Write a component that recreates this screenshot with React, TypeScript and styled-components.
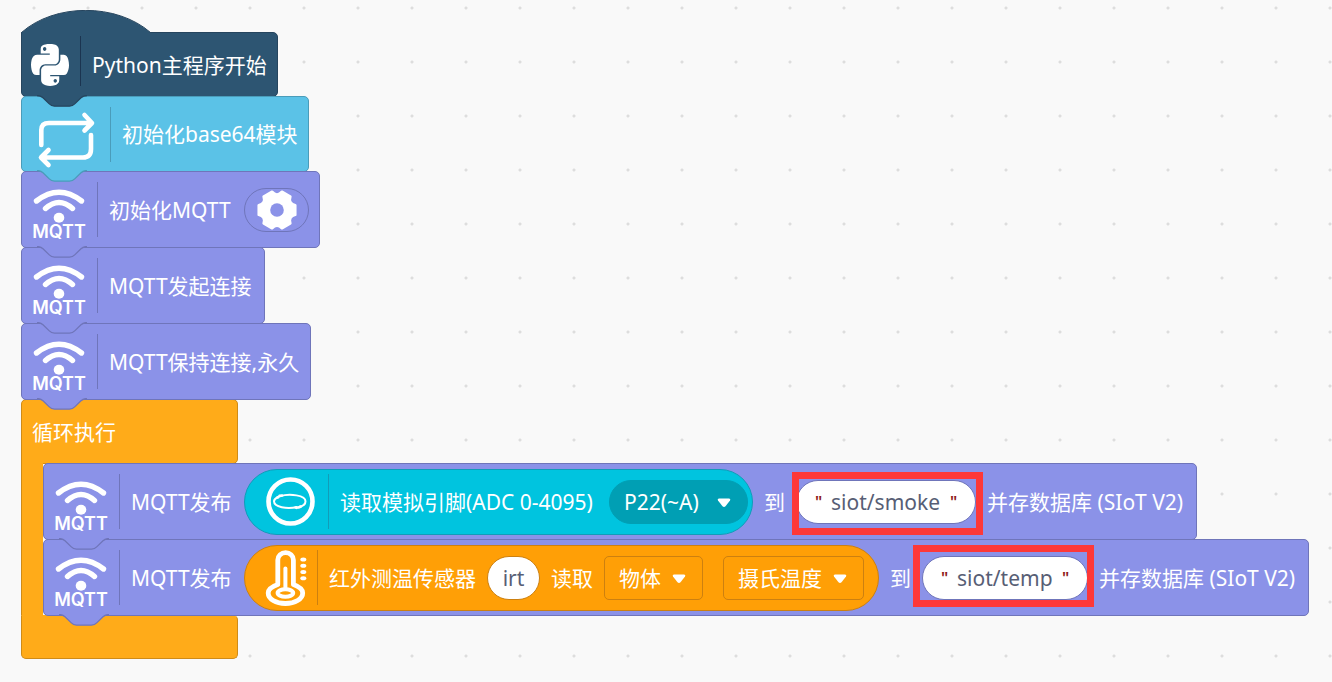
import React from 'react';
import styled, { createGlobalStyle } from 'styled-components';
import { FaPython } from 'react-icons/fa';

const GlobalStyle = createGlobalStyle`
  body {
    margin: 0;
    background: #f9f9f9;
  }
  *, *::before, *::after {
    box-sizing: border-box;
  }
`;

type Tone = { fill: string; line: string };

const navy: Tone = { fill: '#2d5572', line: '#26455e' };
const sky: Tone = { fill: '#5bc2e7', line: '#4a9cba' };
const violet: Tone = { fill: '#8b92e8', line: '#6f75ba' };
const amber: Tone = { fill: '#ffab19', line: '#cf8b17' };
const teal: Tone = { fill: '#00c4df', line: '#129cb8' };
const orange: Tone = { fill: '#ff9f06', line: '#cc8010' };

const Workspace = styled.main`
  min-height: 100vh;
  padding: 32px 21px 23px;
  overflow: hidden;
  background-color: #f9f9f9;
  background-image: radial-gradient(circle, #dddddd 1px, transparent 2px);
  background-size: 54px 54px;
  background-position: 7px -19px;
  font-family: 'Noto Sans', 'Noto Sans CJK SC', sans-serif;
  font-size: 21px;
  line-height: 30px;
  color: #fff;
`;

const Stack = styled.div`
  display: flex;
  flex-direction: column;
  align-items: flex-start;
`;

const BlockBox = styled.section<{ $tone: Tone; $height: number; $hat?: boolean }>`
  position: relative;
  display: flex;
  align-items: center;
  gap: 11px;
  height: ${(p) => p.$height}px;
  margin-bottom: -1px;
  padding: 0 10px 0 9px;
  border: 1px solid ${(p) => p.$tone.line};
  border-radius: ${(p) => (p.$hat ? '0 5px 5px 5px' : '5px')};
  background: ${(p) => p.$tone.fill};
`;

const TabSvg = styled.svg`
  position: absolute;
  z-index: 2;
  left: 15px;
  top: calc(100% - 1px);
`;

const HatSvg = styled.svg`
  position: absolute;
  left: -1px;
  bottom: calc(100% - 1px);
`;

const Divider = styled.span<{ $tone: Tone }>`
  flex: none;
  width: 1px;
  height: 55px;
  background: ${(p) => p.$tone.line};
`;

const HatDivider = styled.span`
  flex: none;
  align-self: flex-start;
  width: 1px;
  height: 50px;
  margin-top: 3px;
  background: #1b3450;
`;

const PythonIcon = styled(FaPython)`
  flex: none;
  width: 38px;
  height: 48px;
`;

const Icon = styled.svg`
  flex: none;
  display: block;
  overflow: visible;
  fill: none;
  stroke: #fff;
  stroke-linecap: round;
  stroke-linejoin: round;
`;

const BrandText = styled.text`
  fill: #fff;
  stroke: none;
  font-family: Inter, sans-serif;
  font-weight: 600;
  font-size: 18px;
`;

const Label = styled.span<{ $width?: number }>`
  flex: none;
  min-width: ${(p) => p.$width ?? 0}px;
  white-space: nowrap;
`;

const FieldLabel = styled.label<{ $width?: number }>`
  flex: none;
  min-width: ${(p) => p.$width ?? 0}px;
  white-space: nowrap;
`;

const Reporter = styled.div<{ $tone: Tone; $end: number }>`
  flex: none;
  display: flex;
  align-items: center;
  gap: 11px;
  height: 66px;
  margin-left: -1px;
  padding: 0 ${(p) => p.$end}px 0 20px;
  border: 1px solid ${(p) => p.$tone.line};
  border-radius: 33px;
  background: ${(p) => p.$tone.fill};
`;

const GearButton = styled.button`
  display: flex;
  align-items: center;
  justify-content: center;
  width: 65px;
  height: 44px;
  padding: 0;
  border: 1px solid ${violet.line};
  border-radius: 22px;
  background: transparent;
`;

const SelectBox = styled.span<{ $round?: boolean; $width: number }>`
  position: relative;
  flex: none;
  display: flex;
  width: ${(p) => p.$width}px;
  height: 44px;
  & + & {
    margin-left: 9px;
  }
  select {
    appearance: none;
    width: 100%;
    height: 100%;
    margin: 0;
    padding: 0 0 0 14px;
    border: 1px solid ${(p) => (p.$round ? '#009fb4' : orange.line)};
    border-radius: ${(p) => (p.$round ? 22 : 5)}px;
    background: ${(p) => (p.$round ? '#009fb4' : orange.fill)};
    color: #fff;
    font: inherit;
    outline: none;
  }
  svg {
    position: absolute;
    right: 17px;
    top: 18px;
    pointer-events: none;
  }
`;

const NameInput = styled.input`
  flex: none;
  width: 53px;
  height: 44px;
  margin: 0;
  padding: 0;
  border: 1px solid ${orange.line};
  border-radius: 22px;
  background: #fff;
  color: #575e75;
  font: inherit;
  text-align: center;
  outline: none;
`;

const StringField = styled.span`
  position: relative;
  flex: none;
  display: flex;
  align-items: center;
  gap: 9px;
  height: 44px;
  padding: 0 18px;
  border: 1px solid ${violet.line};
  border-radius: 22px;
  background: #fff;
`;

const TextInput = styled.input<{ $width: number }>`
  width: ${(p) => p.$width}px;
  height: 30px;
  margin: 0;
  padding: 0;
  border: 0;
  background: transparent;
  color: #575e75;
  font: inherit;
  outline: none;
`;

const Quote = styled.span`
  width: 7px;
  color: #8e1a1a;
  font-size: 16px;
  font-weight: 600;
  line-height: 30px;
  text-align: center;
`;

const Highlight = styled.span<{ $inset: string }>`
  position: absolute;
  z-index: 3;
  inset: ${(p) => p.$inset};
  border: 7px solid #fd3838;
  pointer-events: none;
`;

const LoopHeader = styled.header`
  display: flex;
  align-items: center;
  width: 217px;
  height: 65px;
  padding: 0 10px;
  border: 1px solid ${amber.line};
  border-radius: 5px 5px 5px 0;
  background: ${amber.fill};
`;

const LoopBody = styled.div`
  display: flex;
  margin-top: -1px;
`;

const LoopArm = styled.div`
  position: relative;
  z-index: 1;
  flex: none;
  width: 22px;
  border-left: 1px solid ${amber.line};
  background: ${amber.fill};
`;

const LoopFooter = styled.footer`
  width: 217px;
  height: 44px;
  border: 1px solid ${amber.line};
  border-top-color: ${amber.fill};
  border-radius: 0 5px 5px 5px;
  background: ${amber.fill};
`;

const Tab = ({ tone }: { tone: Tone }) => (
  <TabSvg width="50" height="13" viewBox="0 0 50 13" aria-hidden="true">
    <path
      d="M0 0.5 C3 0.5 4 1 6 2.8 L12 8.6 C13.6 10.2 15 11.2 17.5 11.2 H32.5 C35 11.2 36.4 10.2 38 8.6 L44 2.8 C46 1 47 0.5 50 0.5 V0 H0Z"
      fill={tone.fill}
    />
    <path
      d="M0 0.5 C3 0.5 4 1 6 2.8 L12 8.6 C13.6 10.2 15 11.2 17.5 11.2 H32.5 C35 11.2 36.4 10.2 38 8.6 L44 2.8 C46 1 47 0.5 50 0.5"
      fill="none"
      stroke={tone.line}
      strokeWidth="1.3"
    />
  </TabSvg>
);

type BlockProps = {
  tone: Tone;
  height?: number;
  hat?: boolean;
  children: React.ReactNode;
};

const Block = ({ tone, height = 77, hat, children }: BlockProps) => (
  <BlockBox $tone={tone} $height={height} $hat={hat}>
    {hat && (
      <HatSvg width="131" height="24" viewBox="0 0 131 24" aria-hidden="true">
        <path d="M0.5 24 V22.5 C34 -7 95.5 -7 129.5 22.5 V24Z" fill={tone.fill} />
        <path d="M0.5 24 V22.5 C34 -7 95.5 -7 129.5 22.5" fill="none" stroke={tone.line} />
      </HatSvg>
    )}
    {children}
    <Tab tone={tone} />
  </BlockBox>
);

const MqttIcon = () => (
  <Icon width="55" height="55" viewBox="0 0 55 55" aria-hidden="true">
    <path d="M5.5 19 Q28 1.5 50.5 19" strokeWidth="5.4" />
    <path d="M14.5 26.5 Q28 14.5 41.5 26.5" strokeWidth="5.4" />
    <ellipse cx="28" cy="35.7" rx="5.3" ry="5" fill="#fff" stroke="none" />
    <BrandText x="28" y="56" textAnchor="middle">MQTT</BrandText>
  </Icon>
);

const RepeatIcon = () => (
  <Icon width="68" height="61" viewBox="0 0 68 61" strokeWidth="4.6" aria-hidden="true">
    <path d="M10.3 41 V26 Q10.3 19 18 19 H60.5 M53.500 11 L61 19 L53.500 26.500" />
    <path d="M60 31 V45 Q60 53.500 52 53.500 H10.500 M17.500 46 L10 53.500 L17.500 61" />
  </Icon>
);

const AdcIcon = () => (
  <Icon width="52" height="54" viewBox="0 0 52 54" aria-hidden="true">
    <circle cx="25.5" cy="26.5" r="22" strokeWidth="4.6" />
    <path d="M15 21.200 C25 18 40.500 20.500 40.500 26.200 C40.500 29 38 31 34.500 31.800" strokeWidth="2" />
    <path d="M13 22 C10.500 23.200 9 24.500 9 26.300 C9 32 22 34.500 32 32" strokeWidth="2" />
    <path d="M14.500 20.800 L17 20.500 M12.500 22.500 L13.500 22 M33.500 32.500 L36 31.500 M30.500 32.500 L31.500 32.800" strokeWidth="2.6" />
  </Icon>
);

const ThermometerIcon = () => (
  <Icon width="41" height="54" viewBox="0 0 41 54" aria-hidden="true">
    <path
      d="M12.800 33.500 V9 A7.800 7.300 0 0 1 28.400 9 V33.500 C34 35.500 37.700 38.500 37.700 42 C37.700 48 30 52.500 20.400 52.500 S3.200 48 3.200 42 C3.200 38.500 7 35.500 12.800 33.500Z"
      strokeWidth="4.8"
    />
    <ellipse cx="20.4" cy="42" rx="7.8" ry="3.7" strokeWidth="4" />
    <path d="M20.400 17.500 V37" strokeWidth="4" />
    {[8.5, 14.7, 21, 27.2].map((y) => (
      <ellipse key={y} cx="38.3" cy={y} rx="3" ry="2" fill="#fff" stroke="none" />
    ))}
  </Icon>
);

const polar = (deg: number, r: number) => {
  const a = (deg * Math.PI) / 180;
  return `${(20 + r * Math.cos(a)).toFixed(2)} ${(20 + r * Math.sin(a)).toFixed(2)}`;
};

// Six teeth, each a short chord, joined by shallow curved valleys.
const gearOutline =
  [0, 60, 120, 180, 240, 300]
    .map((t, i) => `${i ? 'L' : 'M'}${polar(t - 15, 19)} L${polar(t + 15, 19)} Q${polar(t + 30, 13)} ${polar(t + 45, 19)}`)
    .join(' ') + 'Z';

const GearIcon = () => (
  <Icon width="40" height="40" viewBox="0 0 40 40" aria-hidden="true">
    <path d={gearOutline} fill="#fff" strokeWidth="2.4" />
    <circle cx="20" cy="20" r="6.8" fill={violet.fill} stroke="none" />
  </Icon>
);

const MqttHead = () => (
  <>
    <MqttIcon />
    <Divider $tone={violet} />
  </>
);

type SelectProps = { label: string; value: string; width: number; round?: boolean };

const Select = ({ label, value, width, round }: SelectProps) => (
  <SelectBox $width={width} $round={round}>
    <select aria-label={label} defaultValue={value}>
      <option>{value}</option>
    </select>
    <svg width="14" height="10" viewBox="0 0 14 10" aria-hidden="true">
      <path d="M1.800 0.500 H12.200 Q14 1 13 2.500 L8.500 8.300 Q7 9.500 5.500 8.300 L1 2.500 Q0 1 1.800 0.500Z" fill="#fff" />
    </svg>
  </SelectBox>
);

type PublishProps = {
  id: string;
  topic: string;
  topicWidth: number;
  inset: string;
  children: React.ReactNode;
};

const PublishBlock = ({ id, topic, topicWidth, inset, children }: PublishProps) => (
  <Block tone={violet}>
    <MqttHead />
    <Label $width={103}>MQTT发布</Label>
    {children}
    <FieldLabel htmlFor={id} $width={21}>到</FieldLabel>
    <StringField>
      <Quote>"</Quote>
      <TextInput id={id} defaultValue={topic} $width={topicWidth} />
      <Quote>"</Quote>
      <Highlight $inset={inset} />
    </StringField>
    <Label $width={199}>并存数据库 (SIoT V2)</Label>
  </Block>
);

export default function App() {
  return (
    <>
      <GlobalStyle />
      <Workspace>
        <Stack>
          <Block tone={navy} height={65} hat>
            <PythonIcon preserveAspectRatio="none" aria-hidden />
            <HatDivider />
            <Label $width={175}>Python主程序开始</Label>
          </Block>
          <Block tone={sky} height={76}>
            <RepeatIcon />
            <Divider $tone={sky} />
            <Label $width={176}>初始化base64模块</Label>
          </Block>
          <Block tone={violet}>
            <MqttHead />
            <Label $width={124}>初始化MQTT</Label>
            <GearButton type="button" aria-label="设置">
              <GearIcon />
            </GearButton>
          </Block>
          <Block tone={violet}>
            <MqttHead />
            <Label $width={145}>MQTT发起连接</Label>
          </Block>
          <Block tone={violet}>
            <MqttHead />
            <Label $width={191}>MQTT保持连接,永久</Label>
          </Block>
          <LoopHeader>循环执行</LoopHeader>
          <LoopBody>
            <LoopArm />
            <Stack>
              <PublishBlock id="topic-smoke" topic="siot/smoke" topicWidth={110} inset="-9px -8px -12px -5px">
                <Reporter $tone={teal} $end={4}>
                  <AdcIcon />
                  <Divider $tone={teal} />
                  <Label $width={258}>读取模拟引脚(ADC 0-4095)</Label>
                  <Select label="引脚" value="P22(~A)" width={139} round />
                </Reporter>
              </PublishBlock>
              <PublishBlock id="topic-temp" topic="siot/temp" topicWidth={96} inset="-12px -7px -8px -10px">
                <Reporter $tone={orange} $end={14}>
                  <ThermometerIcon />
                  <Divider $tone={orange} />
                  <FieldLabel htmlFor="sensor" $width={144}>红外测温传感器</FieldLabel>
                  <NameInput id="sensor" defaultValue="irt" />
                  <Label $width={41}>读取</Label>
                  <Select label="读取对象" value="物体" width={99} />
                  <Select label="温度单位" value="摄氏温度" width={141} />
                </Reporter>
              </PublishBlock>
            </Stack>
          </LoopBody>
          <LoopFooter />
        </Stack>
      </Workspace>
    </>
  );
}
